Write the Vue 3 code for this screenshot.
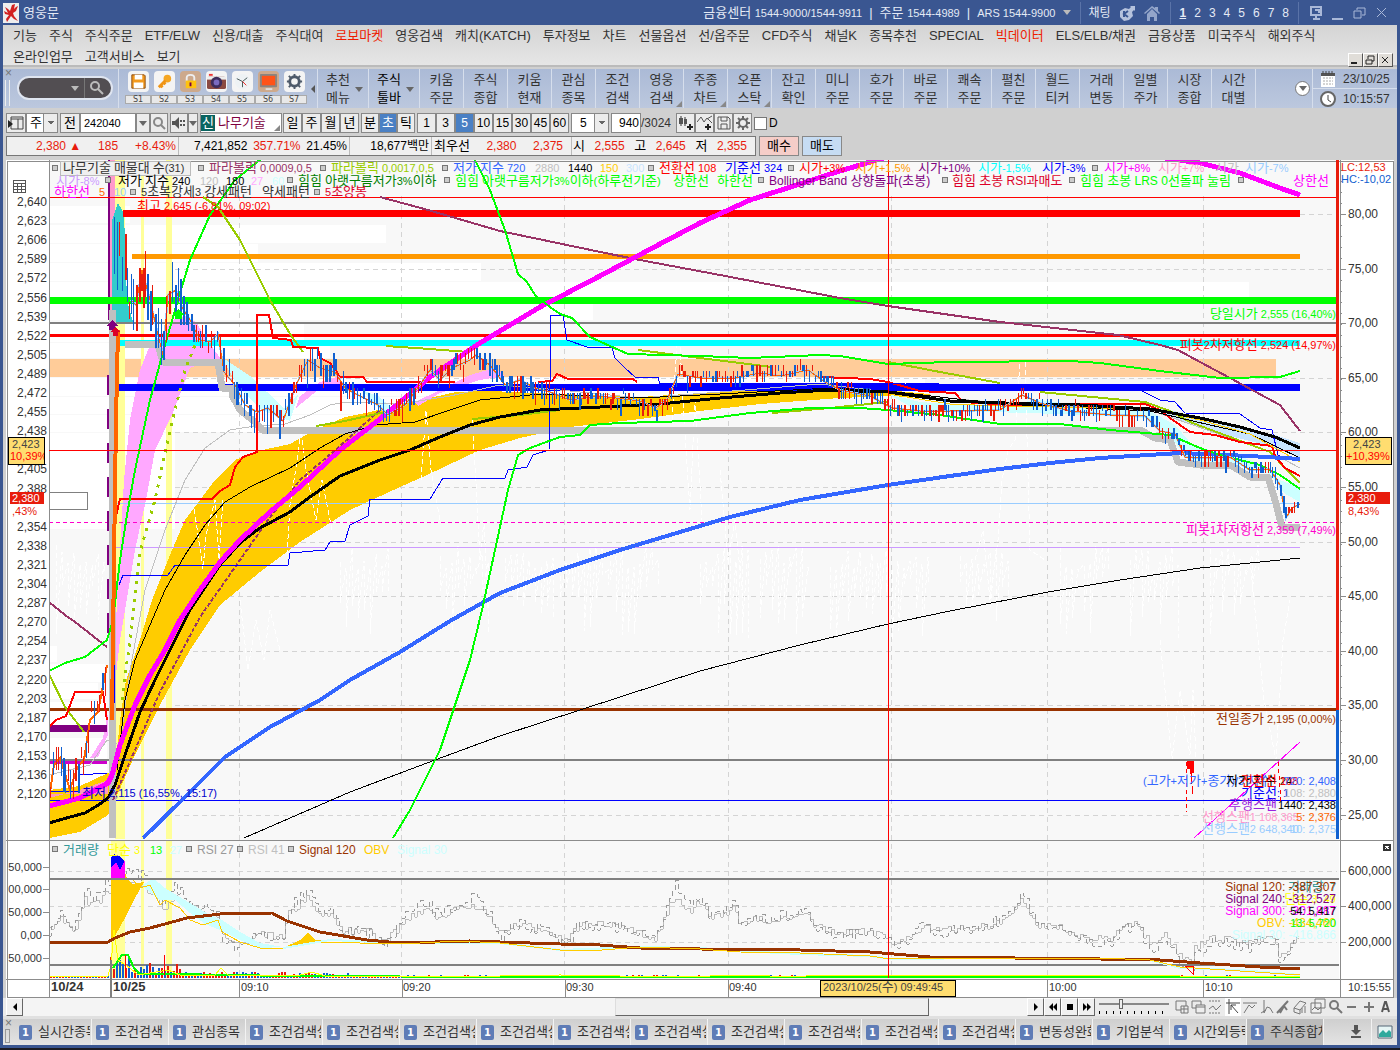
<script setup>
const menuTop = [
  '기능', '주식', '주식주문', 'ETF/ELW', '신용/대출', '주식대여', '로보마켓', '영웅검색', '캐치(KATCH)', '투자정보', '차트',
  '선물옵션', '선/옵주문', 'CFD주식', '채널K', '종목추천', 'SPECIAL', '빅데이터', 'ELS/ELB/채권', '금융상품', '미국주식', '해외주식',
]
const menuBottom = ['온라인업무', '고객서비스', '보기']
const hotMenus = ['로보마켓', '빅데이터']
const screens = [1, 2, 3, 4, 5, 6, 7, 8]
const tools = [
  ['키움', '주문'], ['주식', '종합'], ['키움', '현재'], ['관심', '종목'], ['조건', '검색'], ['영웅', '검색', 1], ['주종', '차트', 1],
  ['오픈', '스탁', 1], ['잔고', '확인'], ['미니', '주문'], ['호가', '주문'], ['바로', '주문'], ['쾌속', '주문'], ['펼친', '주문'],
  ['월드', '티커'], ['거래', '변동'], ['일별', '주가'], ['시장', '종합'], ['시간', '대별'],
]
const periods = ['일', '주', '월', '년']
const units = ['분', '초', '틱']
const counts = ['1', '3', '5', '10', '15', '30', '45', '60']
const tasks = [
  '실시간종목', '조건검색', '관심종목', ...Array(10).fill('조건검색실'), '변동성완화', '기업분석', '시간외등락', '주식종합차',
]

// splits a label into Korean and Latin runs, which are set at different sizes
function runs(text) {
  return text.match(/[가-힣]+|[^가-힣]+/g).map((t) => ({ t, ko: /[가-힣]/.test(t) }))
}

// price axis, one label each 19.1 units
const prices = ['2,640', '2,623', '2,606', '2,589', '2,572', '2,556', '2,539', '2,522', '2,505', '2,489', '2,472', '2,455', '2,438', '',
  '2,405', '2,388', '', '2,354', '2,338', '2,321', '2,304', '2,287', '2,270', '2,254', '2,237', '2,220', '2,203', '2,187', '2,170', '2,153', '2,136', '2,120']
const rates = ['80,00', '75,00', '70,00', '65,00', '60,00', '55,00', '50,00', '45,00', '40,00', '35,00', '30,00', '25,00']
const gridX = [239, 401, 564, 728, 891, 1047, 1203]
const times = [[241, '09:10'], [403, '09:20'], [566, '09:30'], [729, '09:40'], [1049, '10:00'], [1205, '10:10']]
const rightTicks = Array.from({ length: 60 }, (_, i) => 170 + i * 11).filter((y) => y < 836)

// white volume-profile bars: [y, right edge, height]
const profile = [
  [206, 130, 17], [225, 386, 18], [244, 258, 18], [263, 481, 18], [282, 1249, 18], [304, 593, 16], [324, 304, 18], [343, 330, 15],
  [378, 925, 18], [397, 700, 17], [415, 360, 17], [433, 175, 96], [646, 57, 16], [664, 105, 18], [683, 98, 16], [702, 107, 24], [738, 107, 50],
]

const levels = [
  [49, 1337, 197, 1, '#ff0000'], [123, 1300, 213, 7, '#ff0000'], [132, 1300, 256, 5, '#ff9900'],
  [49, 1337, 300, 7, '#00ff00'], [49, 1337, 323, 2, '#808080'], [49, 1337, 335, 3, '#ff0000'],
  [115, 1300, 343, 6, '#00ffff'], [115, 1300, 387, 7, '#0000ff'],
  [115, 1300, 503, 1, '#99ccff'], [115, 1300, 547, 1, '#cc99ff'],
  [49, 1337, 709, 3, '#993300'], [49, 107, 728, 7, '#800080'], [49, 107, 762, 3, '#cc00cc'],
  [49, 1337, 760, 2, '#808080'], [49, 1337, 800, 1, '#0000ff'],
]

const clouds = [
  ['#ffcc00', '49,790 80,786 108,773 115,772 120,720 126,680 140,640 152,600 170,555 185,520 200,500 215,480 235,460 258,451 290,444 315,430 345,417 370,412 400,405 430,398 456,392 490,391 560,394 640,397 700,393 760,390 840,386 930,394 930,398 888,396 840,398 760,404 700,411 640,419 570,427 520,438 480,450 427,475 400,487 350,510 300,542 260,572 220,605 190,650 160,705 135,755 115,800 108,815 80,832 49,838'],
  ['#ff99bb', '49,794 108,794 108,780 80,790 49,798'],
  ['#ffa8ff', '113,700 117,600 124,480 130,420 140,370 150,345 165,330 172,320 186,316 196,322 206,338 220,358 228,366 205,362 190,368 172,415 155,450 146,500 135,550 120,640'],
  ['#ffa8ff', '90,758 103,738 108,712 108,735 98,757'],
  ['#ffa8ff', '300,396 320,382 340,376 340,386 318,390 296,408'],
  ['#ffa8ff', '415,402 440,390 470,375 495,368 505,376 480,380 440,393 418,406'],
  ['#33cccc', '112,322 112,220 118,203 124,213 127,300 133,322'],
  ['#ccffff', '220,356 250,376 284,408 298,395 290,421 262,410 240,389'],
  ['#ccffff', '362,390 378,396 392,408 402,402 392,414 378,408'],
  ['#ccffff', '888,394 920,402 960,405 1005,404 1040,400 1080,406 1150,411 1175,425 1195,448 1230,452 1262,465 1280,480 1300,488 1300,502 1285,494 1270,474 1240,466 1190,462 1170,436 1145,418 1060,414 990,412 920,412'],
  ['#c8e4ff', '1160,408 1200,417 1240,427 1275,435 1300,443 1300,458 1270,446 1230,436 1190,424 1160,412'],
]

const lines = [
  ['#c0c0c0', 7, '112,310 112,838'],
  ['#c0c0c0', 7, '125,344 158,345 163,362 218,362 222,388 232,388 232,395 240,410 255,422 262,430 1140,430 1155,438 1170,440 1178,462 1200,465 1232,466 1250,477 1268,477 1275,500 1282,527 1300,527'],
  ['#c0c0c0', 1, '49,775 90,765 107,740 120,745 130,670 145,590 165,530 185,480 205,448 230,430 255,426 285,424 310,415 330,405 345,402 400,404 450,396 500,385 560,390 640,398 720,392 820,384 888,392 1000,403 1150,410 1230,438 1270,452 1300,468'],
  ['#993366', 2, '49,602 65,615 75,622 107,647'],
  ['#993366', 2, '113,800 135,750 150,715 160,692 200,617 240,560 268,520 300,480 340,446 380,410', '4 2'],
  ['#993366', 2, '380,197 428,210 500,231 610,254 640,260 720,275 840,298 888,306 1000,322 1118,335 1160,345 1178,350 1200,362 1230,378 1254,391 1280,405 1300,431'],
  ['#99cc00', 2, '49,674 65,707 84,732'],
  ['#99cc00', 3, '122,700 133,617 140,552 155,500 170,430 185,370 195,345', '3 6'],
  ['#99cc00', 2, '203,197 218,207 240,240 270,300 290,334 303,352'],
  ['#99cc00', 2, '386,346 430,349 468,352'],
  ['#99cc00', 2, '316,426 345,421 385,412'],
  ['#99cc00', 2, '472,419 520,415 560,410'],
  ['#99cc00', 2, '638,350 700,358 772,367'],
  ['#99cc00', 2, '772,413 830,408 888,402'],
  ['#99cc00', 2, '888,362 940,372 1000,383'],
  ['#99cc00', 2, '1040,392 1145,402 1170,411 1190,422 1230,437 1270,452 1285,468 1300,483'],
  ['#ff0000', 2, '49,727 56,720 66,716 75,692 103,692 107,720'],
  ['#ff0000', 2, '115,520 120,499 212,499 220,491 230,485 235,467 243,457 257,452 257,315 269,315 273,338 291,340 293,347 318,348 320,358 330,363 340,377 363,377 367,382 455,382'],
  ['#ff0000', 2, '538,382 552,381 557,374 568,379 633,379 637,382'],
  ['#ff0000', 2, '820,377 870,379 888,382 920,391 955,393 963,402 1010,405 1145,404 1160,410 1170,418 1190,432 1215,435 1240,442 1272,446 1275,456 1285,468 1300,476'],
  ['#0000ff', 1, '49,791 78,791 80,775 107,773'],
  ['#0000ff', 1, '119,585 123,575 168,575 175,565 288,565 290,553 325,550 330,542 345,541 350,525 368,516 370,499 430,499 443,478 505,478 508,470 527,467 533,455 549,450 551,315 563,315 567,340 587,347 612,348 615,358 625,368 635,377 658,377 660,384 905,383 1140,390 1160,400 1175,402 1185,413 1240,414 1260,428 1272,430 1278,455 1287,459 1300,460'],
  ['#000000', 1, '117,770 125,700 135,660 150,625 165,590 185,555 205,525 225,502 250,487 290,468 320,448 345,434 375,425 415,422 450,410 480,400 540,394 640,398 720,394 830,388 888,391 1000,404 1150,411 1210,425 1250,434 1275,446 1300,458'],
  ['#ffcc00', 1, '888,394 950,404 1000,406 1150,409 1200,420 1250,434 1275,448 1300,462'],
  ['#3366ff', 4, '143,838 180,802 225,757 270,727 320,700 350,680 400,652 450,621 500,593 560,570 620,550 680,532 730,517 800,500 888,485 950,476 1000,469 1050,463 1100,458 1180,453 1250,456 1300,459'],
  ['#000000', 1, '244,838 350,792 435,760 500,736 580,710 700,671 800,645 888,624 950,611 1048,592 1120,580 1200,568 1260,562 1300,558'],
  ['#000000', 3, '49,823 70,817 85,813 100,804 108,798 115,785 125,755 140,712 155,680 170,650 190,610 220,565 240,543 260,528 290,512 310,497 340,476 380,460 410,450 440,437 470,425 500,417 540,410 600,407 660,404 720,398 780,393 830,390 888,392 950,401 1005,403 1080,405 1150,409 1200,418 1240,427 1275,437 1300,448'],
  ['#ff00ff', 5, '49,806 80,798 108,783 112,775 120,745 135,705 150,675 165,650 180,620 200,590 220,562 240,540 270,512 300,487 340,450 380,419 430,377 480,343 540,307 600,276 660,244 700,223 750,200 800,184 830,174 860,165 884,158'],
  ['#ff00ff', 5, '1165,158 1200,163 1240,173 1280,188 1300,195'],
  ['#ff00ff', 1, '1194,838 1300,742'],
  ['#00ff00', 2, '49,671 65,663 85,657 107,640 113,620 120,560 127,515 135,470 150,400 165,345 178,300 190,260 210,215 235,180 262,158'],
  ['#00ff00', 2, '474,158 490,190 505,230 518,274 527,282 535,295 550,307 560,314 572,318 590,337 610,346 628,354 700,356 750,358 820,355 840,356 888,364 950,362 1070,361 1100,363 1160,371 1220,378 1280,377 1300,371'],
  ['#00ff00', 2, '393,838 410,810 440,750 470,660 482,610 495,550 508,490 518,455 530,448 560,437 580,435 590,425 620,423 690,421 750,413 810,408 860,408 888,410 940,415 1000,424 1060,424 1110,430 1170,435 1200,448 1220,455 1240,460 1260,465 1280,475 1300,489'],
  ['#ff6600', 4, '112,720 114,560 116,420 118,330'],
  ['#0000ff', 1, '114,665 114,703'],
  ['#800080', 2, '108,375 108,640', '20 14'],
]

let seed = 7
function rnd() {
  seed = (seed * 16807) % 2147483647
  return seed / 2147483647
}

const whites = [
  '193,501 203,569 206,535 215,500 219,560 223,500', '287,555 290,505 298,455 301,430 306,470 316,520 322,480 332,530',
  '421,480 426,410 431,470 440,520', '472,420 475,465 480,560 484,520 488,610',
  '240,600 248,670 256,620 264,660 270,610 280,650', '672,420 677,345 680,345 684,420 690,510 695,400 702,520', '720,470 728,560 735,520 742,590',
  '975,560 983,530 990,600 998,540 1002,480 1008,450 1015,440 1020,360 1025,360 1030,550 1045,560',
  '1160,640 1172,760 1180,690 1190,755 1193,690 1196,760', '1250,560 1264,700 1276,760 1283,640 1290,600',
]
for (const start of [56, 340, 440, 505, 560, 610, 700, 760, 830, 880, 960, 1060, 1130, 1210]) {
  const pts = []
  for (let i = 0; i < 9; i++) {
    const x = start + i * 6
    pts.push(`${x},${Math.round(545 + rnd() * 25)}`, `${x},${Math.round(570 + rnd() * 70)}`)
  }
  whites.push(pts.join(' '))
}

function sample(points, x) {
  for (let i = 1; i < points.length; i++) {
    const [x0, y0] = points[i - 1]
    const [x1, y1] = points[i]
    if (x <= x1) return y0 + ((y1 - y0) * (x - x0)) / (x1 - x0)
  }
  return points[points.length - 1][1]
}
const yesterday = [[49, 800], [54, 765], [60, 758], [70, 790], [77, 768], [84, 760], [90, 720], [98, 712], [107, 665]]
const today = [[114, 270], [122, 260], [128, 310], [131, 300], [136, 305], [142, 270], [150, 300], [158, 335], [163, 355], [168, 295], [176, 290], [182, 307], [190, 320], [200, 340], [210, 342], [218, 334], [224, 372], [235, 385], [245, 405], [257, 412], [268, 408], [283, 421], [296, 385], [308, 360], [320, 368], [335, 372], [345, 388], [358, 395], [378, 405], [388, 415], [405, 405], [420, 385], [430, 370], [440, 380], [452, 368], [470, 360], [476, 355], [490, 365], [505, 385], [520, 380], [535, 388], [550, 392], [570, 400], [600, 396], [640, 401], [656, 408], [668, 398], [678, 374], [700, 378], [735, 378], [760, 373], [780, 376], [808, 370], [825, 382], [840, 390], [870, 396], [892, 408], [920, 411], [950, 411], [1000, 410], [1022, 395], [1040, 403], [1070, 411], [1110, 415], [1145, 416], [1160, 431], [1175, 434], [1185, 457], [1200, 458], [1230, 457], [1250, 470], [1270, 469], [1280, 485], [1286, 518], [1292, 508], [1300, 504]]
const candles = []
const tick = 5.7
function addCandles(points, from, to, spread) {
  for (let x = from; x < to; x += rnd() < 0.5 ? 2 : 3) {
    const mid = sample(points, x)
    const size = spread(x)
    const top = Math.round(Math.round((mid - size * rnd()) / tick) * tick)
    const steps = Math.max(1, Math.round((size * (0.5 + rnd())) / tick))
    const slope = sample(points, x + 5) - sample(points, x - 5)
    const up = slope < -2 ? rnd() < 0.75 : slope > 2 ? rnd() < 0.25 : rnd() < 0.5
    candles.push({ x, y: top, w: rnd() < 0.4 ? 2 : 1, h: Math.round(steps * tick), c: up ? '#e81c0c' : '#1060d0' })
  }
}
addCandles(yesterday, 50, 107, () => 22)
addCandles(today, 114, 1300, (x) => (x < 128 ? 56 : x < 182 ? 34 : x < 345 ? 18 : x < 560 ? 14 : 10))
const avgPath = today.filter((p) => p[0] > 128).map((p) => p.join(',')).join(' ')
const avgPrev = yesterday.map((p) => p.join(',')).join(' ')

const rsiBase = [[49, 930], [60, 918], [75, 928], [85, 900], [95, 905], [110, 890], [130, 885], [150, 890], [163, 910], [175, 895], [185, 905], [210, 915], [218, 915], [222, 935], [240, 945], [260, 932], [283, 938], [287, 915], [307, 898], [320, 915], [335, 915], [340, 930], [370, 932], [384, 943], [405, 920], [425, 908], [440, 920], [450, 912], [474, 904], [490, 918], [502, 934], [515, 925], [550, 930], [566, 940], [580, 925], [610, 925], [630, 930], [655, 938], [663, 922], [672, 899], [677, 895], [690, 912], [700, 902], [710, 918], [735, 908], [738, 926], [750, 920], [800, 918], [808, 915], [815, 925], [830, 932], [880, 932], [893, 942], [910, 938], [922, 925], [940, 931], [985, 926], [1005, 920], [1022, 900], [1035, 924], [1060, 926], [1070, 933], [1085, 938], [1115, 938], [1120, 928], [1135, 925], [1155, 948], [1165, 935], [1180, 955], [1192, 960], [1195, 948], [1215, 937], [1230, 940], [1250, 942], [1262, 937], [1275, 937], [1280, 958], [1290, 945], [1300, 935]]
function rsiLine(scale, noise) {
  const out = []
  for (let x = 49; x < 1300; x += 3) {
    const y = Math.round(928 + (sample(rsiBase, x) - 928) * scale + (rnd() - 0.5) * noise)
    out.push(`${x},${y} ${x + 2},${y}`)
  }
  return out.join(' ')
}
const rsiSlow = rsiLine(1, 8)
const rsiFast = rsiLine(1.3, 12)

const volumes = []
for (let x = 50; x < 1300; x += 3) {
  const h = x < 110 ? 2 : x < 130 ? 18 * (0.5 + rnd() * 0.7) : x < 180 ? 10 * (0.5 + rnd()) : x < 350 ? 2 + rnd() * 4 : 1 + rnd() * 2
  volumes.push({ x, h: Math.round(h), c: rnd() < 0.5 ? '#e81c0c' : '#1060d0' })
}

const legend = [
  [63, 168, '나무기술 매물대 수(31)', '#333'], [209, 168, '파라볼릭 0,0009,0,5', '#993366'], [331, 168, '파라볼릭 0,0017,0,5', '#99cc00'],
  [453, 168, '저가 지수 720', '#3366ff'], [535, 168, '2880', '#c0c0c0'], [568, 168, '1440', '#000'], [600, 168, '150', '#ffcc00'], [626, 168, '300', '#c8e4ff'],
  [659, 168, '전환선 108', '#ff0000'], [725, 168, '기준선 324', '#0000ff'], [799, 168, '시가+3%', '#ff0000'], [855, 168, '시가+1,5%', '#ff9900'],
  [918, 168, '시가+10%', '#800080'], [978, 168, '시가-1,5%', '#00ffff'], [1042, 168, '시가-3%', '#0000ff'], [1104, 168, '시가+8%', '#ff00ff'],
  [1158, 168, '시가+7%', '#ff99cc'], [1215, 168, '시가', '#c0c0c0'], [1245, 168, '시가-7%', '#99ccff'],
  [56, 181, '시가-8%', '#cc99ff'], [118, 181, '저가 지수 240', '#000'], [200, 181, '120', '#c0c0c0'], [226, 181, '180', '#000'], [251, 181, '27', '#ffa8ff'],
  [272, 181, '60', '#ccffff'], [298, 181, '힘힘 아랫구름저가3%이하', '#008000'], [455, 181, '힘힘 아랫구름저가3%이하(하루전기준)', '#00ff00'],
  [673, 181, '상한선', '#00ff00'], [717, 181, '하한선', '#00ff00'], [769, 181, 'Bollinger Band 상향돌파(초봉)', '#800080', 1],
  [952, 181, '힘힘 초봉 RSI과매도', '#dc0028', 1], [1080, 181, '힘힘 초봉 LRS 0선돌파 눌림', '#00ff00', 1], [1293, 181, '상한선', '#ff00ff'],
  [54, 192, '하한선', '#ff00ff'], [99, 192, '5', '#ff6600'], [114, 192, '10', '#99ccff'], [141, 192, '5초복강세3 강세패턴', '#333'], [262, 192, '약세패턴', '#333'],
  [325, 192, '5초양봉', '#dc0028'],
  [63, 850, '거래량', '#339999'], [107, 850, '단순 3', '#ffff00'], [150, 850, '13', '#00ff00'], [170, 850, '27', '#ccffff'],
  [197, 850, 'RSI 27', '#999', 1], [248, 850, 'RSI 41', '#c0c0c0', 1], [299, 850, 'Signal 120', '#993300', 1], [364, 850, 'OBV', '#ffcc00', 1], [397, 850, 'Signal 30', '#ccffff', 1],
]
const markers = [[52, 168], [198, 168], [320, 168], [442, 168], [648, 168], [788, 168], [1092, 168], [105, 180], [287, 180], [444, 180], [758, 180], [942, 180], [1069, 180], [1238, 180], [130, 192], [314, 192], [52, 849], [186, 849], [237, 849], [288, 849]]

const notes = [
  [137, 206, '최고 2,645 (-6,81%, 09:02)', '#ff0000', 0, 'start'], [82, 793, '최저 2,115 (16,55%, 15:17)', '#0000cc', 0, 'start'],
  [1336, 314, '당일시가 2,555 (16,40%)', '#00ff00', 0, 'end'], [1336, 345, '피봇2차저항선 2,524 (14,97%)', '#ff0000', 0, 'end'],
  [1336, 530, '피봇1차저항선 2,359 (7,49%)', '#ff00cc', 0, 'end'], [1336, 719, '전일종가 2,195 (0,00%)', '#993300', 0, 'end'],
  [1143, 781, '(고가+저가+종가)/3 지수', '#3366ff', 0, 'start'], [1226, 781, '저가 지수 24', '#000', 0, 'start'], [1241, 781, '전환선 108', '#ff0000', 0, 'start'],
  [1336, 781, '720: 2,408', '#3366ff', 0, 'end'], [1241, 793, '기준선: 1', '#0000ff', 0, 'start'], [1336, 793, '108: 2,880', '#c0c0c0', 0, 'end'],
  [1229, 805, '후행스팬', '#9922dd', 0, 'start'], [1336, 805, '1440: 2,438', '#000', 0, 'end'], [1202, 817, '선행스팬1 108,365', '#ff99cc', 0, 'start'],
  [1336, 817, '5: 2,376', '#ff6600', 0, 'end'], [1202, 829, '선행스팬2 648,340', '#99ccff', 0, 'start'], [1336, 829, '10: 2,375', '#99ccff', 0, 'end'],
  [1336, 887, '거래량: 7', '#339999', 0, 'end'], [1336, 887, 'Signal 120: -387,307', '#993300', 1, 'end'],
  [1336, 899, '단순 3: 49', '#ffff00', 0, 'end'], [1336, 899, 'Signal 240: -312,527', '#800080', 1, 'end'],
  [1336, 911, 'Signal 300: -301,887', '#ff00ff', 1, 'end'], [1336, 911, '54: 5,417', '#000', 0, 'end'],
  [1336, 923, 'OBV: -434,460', '#ffcc00', 1, 'end'], [1336, 923, '13: 5,720', '#00ff00', 0, 'end'], [1336, 935, 'Signal 30: -416,866', '#ccffff', 1, 'end'],
]
const volLeft = [[867, '50,000'], [889, '00,000'], [912, '50,000'], [935, '0,00'], [958, '50,000']]
const volRight = [[871, '600,000'], [906, '400,000'], [942, '200,000']]
</script>

<template>
  <div class="app">
    <header class="title">
      <svg class="logo" viewBox="0 0 16 20"><rect width="16" height="20" fill="#eee" /><path d="M9 2l3-1-1 5 2-2 2-1-2 5-3 2 1 3 4 5-4-2-3-3-2 3-2 3-1-3 3-4-4-1-1-3 4 2-3-6 3 2 2 2z" fill="#d22020" /></svg>
      <h1>영웅문</h1>
      <span class="phones">금융센터 <small>1544-9000/1544-9911</small><s>|</s>주문 <small>1544-4989</small><s>|</s><small>ARS 1544-9900</small></span>
      <i class="caret light"></i>
      <span class="tcell chat">채팅
        <svg width="18" height="18" viewBox="0 0 18 18"><path d="M2 7l5-3 4 1 2-2-1-1h5v5l-1-1-2 2 1 4-4 4-5 1-4-4z" fill="#b5c2dd" /><path d="M6 7v6M10 7l-4 3 4 3" stroke="#3a5691" stroke-width="2" fill="none" /></svg>
        <svg width="18" height="18" viewBox="0 0 18 18"><path d="M1 9l8-7 3 2V3h3v4l2 2-1 1-7-6-7 6zM4 10l5-5 5 5v7h-3v-4H7v4H4z" fill="#93a5ca" /></svg>
      </span>
      <nav class="tcell screens"><a v-for="n in screens" :key="n" href="#" :class="{ on: n === 1 }">{{ n }}</a></nav>
      <span class="tcell wins">
        <svg width="80" height="18" viewBox="0 0 80 18" fill="none" stroke="#a9b8d8" stroke-width="2"><path d="M2 3h10v8H2zM7 11v4M4 15h7M6 6h4v3" /><path d="M23 15h11" /><path d="M45 7h7v7h-7zM48 6V4h8v7h-3M68 4l9 9M77 4l-9 9" stroke-width="1" /></svg>
      </span>
    </header>

    <nav class="menu">
      <div class="menurow"><a v-for="m in menuTop" :key="m" href="#" :class="{ hot: hotMenus.includes(m) }">{{ m }}</a></div>
      <div class="menurow">
        <a v-for="m in menuBottom" :key="m" href="#">{{ m }}</a>
        <span class="mdi"><button aria-label="최소화"><svg viewBox="0 0 12 12"><path d="M2 9h6" /></svg></button><button aria-label="복원"><svg viewBox="0 0 12 12"><path d="M2 6h6v4H2zM4 5V2h6v5H8" stroke-width="1" /></svg></button><button aria-label="닫기"><svg viewBox="0 0 12 12"><path d="M3 3l6 6M9 3l-6 6" stroke-width="1" /></svg></button></span>
      </div>
    </nav>

    <div class="toolbar">
      <div class="grip"><span>×</span><i></i></div>
      <div class="searchcell">
        <div class="pill"><input aria-label="화면검색" /><i class="caret light"></i><button aria-label="검색"><svg width="14" height="14" viewBox="0 0 14 14" fill="none" stroke="#bbb" stroke-width="2"><circle cx="5" cy="5" r="4" /><path d="M8 8l5 5" /></svg></button></div>
      </div>
      <div class="shots">
        <div class="shot"><button aria-label="저장"><svg viewBox="0 0 20 20"><path d="M3 3h13l1 1v13H3z" fill="#f39a1e" stroke="#8a4a10" /><path d="M6 3h8v5H6zM5 11h10v6H5z" fill="#fff" /></svg></button><span>S1</span></div>
        <div class="shot"><button aria-label="키"><svg viewBox="0 0 20 20"><circle cx="13" cy="7" r="4" fill="#f5a623" /><path d="M11 9l-7 7M6 14l2 2M9 11l2 2" stroke="#ef9415" stroke-width="3" /></svg></button><span>S2</span></div>
        <div class="shot tan"><button aria-label="잠금"><svg viewBox="0 0 20 20"><path d="M6 10V6q0-3 4-3t4 3v4" fill="none" stroke="#eee" stroke-width="2" /><rect x="5" y="9" width="11" height="8" fill="#ffc20e" /><path d="M10 11v4" stroke="#704" stroke-width="2" /></svg></button><span>S3</span></div>
        <div class="shot"><button aria-label="캡처"><svg viewBox="0 0 20 20"><rect y="5" width="20" height="13" rx="2" fill="#8b4a42" /><rect y="5" width="20" height="3" fill="#eee" /><circle cx="10" cy="11" r="6" fill="#3e2c5c" /><circle cx="10" cy="11" r="3" fill="#7b6bc0" /><rect x="2" y="2" width="4" height="2" fill="#e33" /></svg></button><span>S4</span></div>
        <div class="shot"><button aria-label="시계"><svg viewBox="0 0 20 20"><circle cx="10" cy="10" r="8" fill="#eef2f4" /><path d="M4 7l6 3 5-4M10 10v6" stroke="#455" fill="none" /><path d="M10 10l4 4" stroke="#e22" /></svg></button><span>S5</span></div>
        <div class="shot tan"><button aria-label="모니터"><svg viewBox="0 0 20 20"><rect x="1" y="2" width="18" height="14" rx="1" fill="#8a8580" /><rect x="3" y="4" width="14" height="10" fill="#ff5318" /><path d="M7 18h7" stroke="#ddd" stroke-width="2" /></svg></button><span>S6</span></div>
        <div class="shot"><button aria-label="설정"><svg viewBox="0 0 20 20"><circle cx="10" cy="10" r="5" fill="none" stroke="#4e5a6a" stroke-width="3" /><path d="M10 2v3M10 15v3M2 10h3M15 10h3M4 4l3 3M13 13l3 3M16 4l-3 3M7 13l-3 3" stroke="#4e5a6a" stroke-width="2" /></svg></button><span>S7</span></div>
        <i class="back"></i>
      </div>
      <button class="tool first">추천<br />메뉴<i class="caret"></i></button>
      <button class="tool first dark">주식<br />툴바<i class="caret"></i></button>
      <button v-for="(t, i) in tools" :key="i" class="tool">{{ t[0] }}<br />{{ t[1] }}<i v-if="t[2]" class="fold"></i></button>
      <div class="morecell"><button class="more" aria-label="더보기"><i class="caret"></i></button></div>
      <div class="clock">
        <div><svg width="16" height="16" viewBox="0 0 16 16"><path d="M1 2h14v14H1z" fill="#fff" /><path d="M1 2h14v3H1z" fill="#555" /><path d="M3 7h10M3 10h10M3 13h10" stroke="#aaa" stroke-dasharray="2 1" /><path d="M3 0v3M6 0v3M9 0v3M12 0v3" stroke="#444" /></svg>23/10/25</div>
        <div><svg width="16" height="16" viewBox="0 0 16 16"><circle cx="8" cy="8" r="7" fill="#fff" stroke="#666" stroke-width="2" /><path d="M8 4v5l3 2" fill="none" stroke="#444" /></svg>10:15:57</div>
      </div>
    </div>

    <div class="code">
      <button class="b w20" aria-label="차트창"><svg width="16" height="14" viewBox="0 0 16 14" fill="none" stroke="#444"><path d="M3 1h12v12H3zM3 3h12M10 3v10" /><path d="M0 4l5 4-5 4z" fill="#222" stroke="none" /></svg></button>
      <select class="b ko w31" aria-label="종류"><option>주</option></select>
      <button class="b ko w20 gap">전</button>
      <input class="b num w56" aria-label="종목코드" value="242040" />
      <button class="b w14" aria-label="목록"><i class="caret"></i></button>
      <button class="b w18" aria-label="찾기"><svg width="14" height="14" viewBox="0 0 14 14" fill="none" stroke="#888" stroke-width="2"><circle cx="6" cy="6" r="4" /><path d="M9 9l4 4" /></svg></button>
      <button class="b w18 gap" aria-label="소리"><svg width="14" height="12" viewBox="0 0 14 12" fill="#555"><path d="M0 4h3l4-4v12L3 8H0z" /><path d="M9 3v2M9 7v2M12 3v2M12 7v2" stroke="#555" stroke-width="2" /></svg></button>
      <button class="b w10" aria-label="소리목록"><i class="caret"></i></button>
      <div class="b ko name"><em>신</em>나무기술<i class="fold"></i></div>
      <button v-for="p in periods" :key="p" class="b ko w19">{{ p }}</button>
      <i class="space"></i>
      <button v-for="u in units" :key="u" class="b ko w18" :class="{ sel: u === '초' }">{{ u }}</button>
      <i class="space"></i>
      <button v-for="c in counts" :key="c" class="b w19" :class="{ sel: c === '5' }">{{ c }}</button>
      <select class="b w38 gap" aria-label="간격"><option>5</option></select>
      <input class="b w30 gap right" aria-label="봉수" value="940" />
      <span class="total">/3024</span>
      <button class="b w19 gap" aria-label="봉차트"><svg viewBox="0 0 16 16" width="16" height="16"><path d="M3 1v10M7 2v9" stroke="#333" /><path d="M1 3h4v6H1zM6 4h3v5H6z" fill="#555" /><path d="M12 9v6M9 12h6" stroke="#222" stroke-width="2" /></svg></button>
      <button class="b w19" aria-label="지표추가"><svg viewBox="0 0 16 16" width="16" height="16" fill="none" stroke="#555"><path d="M0 7l4-5 3 5 3-4 5 5M10 4l5-3" /><path d="M11 9v6M8 12h6" stroke="#222" stroke-width="2" /></svg></button>
      <button class="b w19" aria-label="저장"><svg viewBox="0 0 16 16" width="16" height="16" fill="none" stroke="#555"><path d="M2 2h10l2 2v10H2zM5 2v4h6V2M5 14V9h6v5" /></svg></button>
      <button class="b w19" aria-label="설정"><svg viewBox="0 0 16 16" width="16" height="16" fill="none" stroke="#666"><circle cx="8" cy="8" r="4" stroke-width="2" /><path d="M8 1v3M8 12v3M1 8h3M12 8h3M3 3l2 2M11 11l2 2M13 3l-2 2M5 11l-2 2" stroke-width="2" /></svg></button>
      <label class="day"><input type="checkbox" />D</label>
    </div>

    <div class="quotes">
      <div class="qbox">
        <div class="q q1 red"><span>2,380 ▲</span><span>185</span><span>+8.43%</span></div>
        <div class="q q2"><span>7,421,852</span><span class="red">357.71%</span><span>21.45%</span></div>
        <div class="q q3"><span>18,677백만</span></div>
        <div class="q q4"><span class="ko">최우선</span><span class="red">2,380</span><span class="red">2,375</span></div>
        <div class="q q5"><span class="ko">시</span><span class="red">2,555</span><span class="ko">고</span><span class="red">2,645</span><span class="ko">저</span><span class="red">2,355</span></div>
      </div>
      <button class="buy">매수</button>
      <button class="sell">매도</button>
    </div>

    <main class="chart">
      <svg viewBox="6 160 1388 838" shape-rendering="crispEdges">
        <defs>
          <clipPath id="plot"><rect x="49" y="160" width="1290" height="679" /></clipPath>
          <clipPath id="vol"><rect x="49" y="840" width="1290" height="138" /></clipPath>
          <clipPath id="laxis"><rect x="7" y="160" width="37" height="820" /></clipPath>
        </defs>
        <rect x="6" y="160" width="1388" height="838" fill="#fff" />
        <rect x="49" y="160" width="1290" height="819" fill="#f8f8f8" />

        <g clip-path="url(#plot)">
          <rect v-for="(p, i) in profile" :key="i" x="49" :y="p[0]" :width="p[1] - 49" :height="p[2]" fill="#fff" />
          <rect x="49" y="359" width="1227" height="18" fill="#ffcc99" />
          <rect x="115" y="160" width="10" height="680" fill="#ffff99" />
          <rect x="141" y="160" width="3" height="680" fill="#ffff99" />
          <rect x="166" y="160" width="6" height="680" fill="#ffff99" />
          <rect x="110" y="160" width="5" height="150" fill="#ff99cc" />
          <rect x="108" y="160" width="2" height="160" fill="#800080" />
        </g>
        <g stroke="#d4d4d4" stroke-dasharray="5 4">
          <line v-for="x in gridX" :key="x" :x1="x" :x2="x" y1="196" y2="978" stroke-width="1" />
          <line v-for="(r, i) in rates" :key="r" x1="175" x2="1337" :y1="Math.round(214 + i * 54.6)" :y2="Math.round(214 + i * 54.6)" />
          <line v-for="y in [871, 906, 942]" :key="y" x1="49" x2="1337" :y1="y" :y2="y" />
        </g>

        <g clip-path="url(#plot)" fill="none">
          <polygon v-for="(c, i) in clouds" :key="i" :points="c[1]" :fill="c[0]" />
          <polyline v-for="(w, i) in whites" :key="'w' + i" :points="w" stroke="#fff" stroke-dasharray="5 3" />
          <line v-for="(l, i) in levels" :key="'l' + i" :x1="l[0]" :x2="l[1]" :y1="l[2]" :y2="l[2]" :stroke="l[4]" :stroke-width="l[3]" />
          <line x1="49" x2="1337" y1="522" y2="522" stroke="#ff00cc" stroke-dasharray="4 3" />
          <polyline v-for="(l, i) in lines" :key="'p' + i" :points="l[2]" :stroke="l[0]" :stroke-width="l[1]" :stroke-dasharray="l[3]" stroke-linejoin="round" />
          <polyline :points="avgPath" stroke="#99ccff" stroke-width="2" />
          <polyline :points="avgPath" stroke="#ff6600" />
          <polyline :points="avgPrev" stroke="#ff6600" stroke-width="2" />
          <rect v-for="(c, i) in candles" :key="'c' + i" :x="c.x" :y="c.y" :width="c.w" :height="c.h" :fill="c.c" stroke="none" />
          <path d="M106 326l6-6 6 6h-3v4h-6v-4z" fill="#800080" />
          <path d="M110 332l5-5 5 5h-2v4h-5v-4z" fill="#dc0028" />
          <path d="M172 315l6-6 6 6h-2v4h-7v-4z" fill="#00ff00" />
          <path d="M1187 761h7v12h-2l1 26-3-30h-3z" fill="#ff0000" />
          <path d="M1186 762v50M1278 762l3 40" stroke="#ff0000" stroke-dasharray="4 3" />
          <path d="M49 492h38v17H49" stroke="#808080" />
        </g>

        <g clip-path="url(#vol)" fill="none">
          <rect x="111" y="840" width="14" height="138" fill="#ffff99" />
          <rect x="141" y="840" width="3" height="138" fill="#ffff99" />
          <rect x="166" y="840" width="6" height="138" fill="#ffff99" />
          <polyline :points="rsiSlow" stroke="#bbb" />
          <polyline :points="rsiFast" stroke="#999" stroke-dasharray="5 3" />
          <polygon points="111,940 111,868 115,862 122,860 126,876 132,884 144,882 135,898 125,918 115,936" fill="#ffcc00" />
          <polygon points="111,858 114,854 119,856 124,860 124,870 111,870" fill="#0000ff" />
          <polygon points="111,868 116,862 120,870 125,860 125,879 111,879" fill="#ff00ff" />
          <polygon points="142,886 153,878 165,888 185,900 210,915 222,920 240,932 260,943 283,947 260,948 240,940 220,930 205,924 190,913 175,900 160,900" fill="#ccffff" />
          <polyline points="125,878 133,880 140,888 150,885 160,905 165,900 180,908 190,920 203,925 218,920 222,932 240,942 260,948 283,948" stroke="#ffcc00" />
          <polygon points="283,948 300,940 308,933 315,940 330,940 300,946" fill="#ffcc00" />
          <line x1="49" x2="1339" y1="879" y2="879" stroke="#808080" stroke-width="2" />
          <line x1="49" x2="1339" y1="965" y2="965" stroke="#808080" stroke-width="2" />
          <rect v-for="(v, i) in volumes" :key="i" :x="v.x" :y="978 - v.h" width="2" :height="v.h" :fill="v.c" />
          <polyline points="113,968 122,955 128,955 134,968 140,974 180,974 220,975 300,976 500,977 1300,977" stroke="#00ff00" stroke-width="2" />
          <polyline points="49,976 108,976 111,965 114,930 118,960 130,968 138,975 168,970 180,975 215,975 221,968 228,975 300,975 312,972 325,976 500,976 560,975 680,977 740,975 800,977 812,975 900,975 1180,976 1300,976" stroke="#ffff00" />
          <polyline points="283,948 330,940 400,943 500,943 560,950 640,947 700,948 740,951 800,954 870,956 890,959 1000,958 1150,960 1180,968 1240,970 1300,975" stroke="#ccffff" stroke-width="2" />
          <polyline points="49,942 108,942 115,938 130,932 150,928 187,918 220,914 272,913 287,921 320,932 367,940 400,943 470,941 560,944 600,945 640,948 700,949 800,950 870,952 930,957 1100,959 1160,960 1200,963 1260,967 1300,969" stroke="#993300" stroke-width="3" />
          <polyline points="320,942 400,944 460,941 500,943 560,950 590,951 640,947 700,949 740,952 800,953 870,956 890,959 1000,958 1100,958 1150,960 1180,967 1240,971 1300,975" stroke="#ffcc00" />
          <path d="M1185 966h8v8zM125 955v20M164 955v20" stroke="#ff0000" />
        </g>

        <g fill="none" stroke="#8c8c8c">
          <path d="M7 161H1393V997H7zM6 840H1393M6 979H1393M49 160V997M1340 160V997" />
          <path d="M111 979v18M239 979v18M402 979v18M565 979v18M728 979v18M1047 979v18M1203 979v18" />
          <path v-for="y in rightTicks" :key="y" :d="`M1340 ${y}h2`" />
          <path v-for="(r, i) in rates" :key="r" :d="`M1340 ${Math.round(214 + i * 54.6)}h6`" />
          <path d="M1340 871h6M1340 906h6M1340 942h6M43 867h6M43 889h6M43 912h6M43 935h6M43 958h6" />
        </g>
        <line x1="111" x2="111" y1="960" y2="997" stroke="#808080" stroke-width="2" />
        <line x1="49" x2="1337" y1="450" y2="450" stroke="#ff0000" />
        <line x1="888" x2="888" y1="160" y2="978" stroke="#ff0000" />
        <rect x="1336" y="160" width="3" height="550" fill="#e81c0c" />
        <rect x="1336" y="710" width="3" height="129" fill="#1060d0" />

        <rect x="60" y="161" width="130" height="14" fill="#f0f0f0" stroke="#bbb" />
        <rect v-for="(m, i) in markers" :key="i" :x="m[0]" :y="m[1] - 3" width="5" height="5" fill="#ccc" stroke="#777" />
        <text v-for="(t, i) in legend" :key="i" :x="t[0]" :y="t[1] + 4" :fill="t[3]" :class="{ reg: t[4] }"><tspan v-for="(r, j) in runs(t[2])" :key="j" :class="{ ko: r.ko }">{{ r.t }}</tspan></text>
        <text v-for="(t, i) in notes" :key="i" :x="t[0]" :y="t[1] + 4" :fill="t[3]" :class="{ reg: t[4] }" :text-anchor="t[5]"><tspan v-for="(r, j) in runs(t[2])" :key="j" :class="{ ko: r.ko }">{{ r.t }}</tspan></text>

        <g class="axis" fill="#333">
          <text v-for="(p, i) in prices" :key="i" x="47" :y="Math.round(206 + i * 19.1)" text-anchor="end">{{ p }}</text>
          <text v-for="(r, i) in rates" :key="r" x="1348" :y="Math.round(218 + i * 54.6)">{{ r }}</text>
          <text v-for="(v, i) in volRight" :key="i" x="1348" :y="v[0] + 4">{{ v[1] }}</text>
          <text x="51" y="991" class="bold">10/24</text>
          <text x="113" y="991" class="bold">10/25</text>
        </g>
        <g fill="#333">
          <text v-for="(v, i) in volLeft" :key="i" x="42" :y="v[0] + 4" text-anchor="end">{{ v[1] }}</text>
          <text v-for="t in times" :key="t[1]" :x="t[0]" y="991">{{ t[1] }}</text>
          <text x="1348" y="991">10:15:55</text>
        </g>
        <text x="1341" y="171" fill="#e81c0c">LC:12,53</text>
        <text x="1341" y="183" fill="#1060d0">HC:-10,02</text>
        <rect x="8" y="437" width="36" height="27" fill="#ffdd70" stroke="#000" />
        <rect x="1345" y="437" width="46" height="27" fill="#ffdd70" stroke="#000" />
        <g>
          <text x="12" y="448" fill="#444">2,423</text><text x="10" y="460" fill="#ff0000" clip-path="url(#laxis)">10,39%</text>
          <text x="1353" y="448" fill="#444">2,423</text><text x="1346" y="460" fill="#ff0000">+10,39%</text>
          <rect x="10" y="492" width="34" height="12" fill="#e81c0c" /><rect x="1346" y="492" width="44" height="12" fill="#e81c0c" />
          <text x="12" y="502" fill="#fff">2,380</text><text x="12" y="515" fill="#e81c0c">,43%</text>
          <text x="1348" y="502" fill="#fff">2,380</text><text x="1348" y="515" fill="#e81c0c">8,43%</text>
        </g>
        <rect x="820" y="980" width="135" height="16" fill="#ffdd70" stroke="#000" />
        <text x="823" y="991" fill="#444"><tspan v-for="(r, j) in runs('2023/10/25(수) 09:49:45')" :key="j" :class="{ ko: r.ko }">{{ r.t }}</tspan></text>
        <path d="M13 180h12v12H13zM13 183h12M13 186h12M13 189h12M17 183v9M21 183v9" fill="none" stroke="#555" />
        <rect x="1383" y="844" width="8" height="7" fill="#333" /><path d="M1385 846l4 3M1389 846l-4 3" stroke="#fff" />
      </svg>
    </main>

    <div class="scroll">
      <button class="s3" aria-label="왼쪽"><svg width="6" height="8"><path d="M5 0v8L1 4z" /></svg></button>
      <div class="track"><div class="thumb"></div></div>
      <button class="s3" aria-label="재생"><svg width="6" height="8"><path d="M1 0v8l4-4z" /></svg></button>
      <button class="s3" aria-label="뒤로"><svg width="10" height="8"><path d="M5 0v8L1 4zM9 0v8L5 4z" /></svg></button>
      <button class="s3" aria-label="정지"><svg width="8" height="8"><path d="M1 1h6v6H1z" /></svg></button>
      <button class="s3" aria-label="앞으로"><svg width="10" height="8"><path d="M1 0v8l4-4zM5 0v8l4-4z" /></svg></button>
      <div class="speed"><input type="range" aria-label="속도" min="0" max="10" value="3" /><i></i></div>
      <svg class="drawing" viewBox="0 0 224 18" width="224" height="18" fill="none" stroke="#777">
        <path d="M6 3h10v9H6z" /><path d="M11 8h7v7h-7zM14 8v7M11 11h7" fill="#eee" />
        <path d="M22 3h9v7h-9z" /><path d="M26 7h9v8h-9zM26 9h9" fill="#eee" />
        <path d="M39 3h12M39 15h12" stroke-dasharray="2 1" /><path d="M39 11l4-3 3 4 5-5" />
        <rect x="55" y="0" width="16" height="18" fill="#fff" stroke="none" /><path d="M56 5h14M59 1v15M61 7l7 8M61 7v5M61 7h5" stroke="#444" />
        <path d="M73 5h14M74 15l5-8 3 3 3-3" /><path d="M94 2v13l3-6 3 1 3 5M91 15l5-3" /><path d="M107 15l11-12M110 15l4-7 3 4" stroke-width="2" />
        <path d="M124 10l6-7 6 2-6 7zM124 10v4l6 2v-4M135 8v7M132 10v5" /><path d="M145 1h10v9h-10zM141 5h10v10h-10z" fill="#eee" /><path d="M142 12l3-3 3 3 3-3" />
        <circle cx="164" cy="7" r="4" stroke-width="2" /><path d="M167 10l5 5M177 9h9M194 9h10M199 4v10" stroke-width="2" /><path d="M212 14l3-10h1l3 10M213 11h5" stroke="#555" stroke-width="2" />
      </svg>
    </div>

    <footer class="tasks">
      <div class="tgrip">×<i></i></div>
      <button v-for="(t, i) in tasks" :key="i" class="task" :class="{ now: i === 16 }"><b>1</b><span>{{ t }}</span></button>
      <span class="tail wide"><svg width="14" height="16" viewBox="0 0 14 16"><path d="M5 1h4v5h3l-5 5-5-5h3zM2 12h10v2H2z" fill="#555" /></svg></span>
      <span class="tail"><svg width="16" height="14" viewBox="0 0 16 14"><path d="M1 1h14v12H1z" fill="#e6f5f5" stroke="#567" /><path d="M2 12V9l4-4 3 3 3-3 2 2v5z" fill="#2fa99d" /></svg></span>
    </footer>
  </div>
</template>

<style>
body { margin: 0; background: #1c1c24; }
</style>

<style scoped>
.app { box-sizing: border-box; min-height: 1048px; border: solid #3a5691; border-width: 0 3px 3px; background: #d0d0d0; font: 13px/16px "Liberation Sans", "Noto Sans CJK KR", sans-serif; color: #333; overflow: hidden; }
a { color: inherit; text-decoration: none; }
button, input, select { font: inherit; color: inherit; padding: 0; margin: 0; border: 0; border-radius: 0; box-sizing: border-box; }
svg { display: block; flex: none; }
.caret { border: 4px solid transparent; border-top: 5px solid #666; border-bottom: 0; flex: none; }
.caret.light { border-top-color: #bbb; }
.fold { position: absolute; right: 1px; bottom: 1px; border: 3px solid; border-color: transparent #888 #888 transparent; }

.title { display: flex; align-items: center; height: 25px; background: #3a5691; color: #e4eaf5; }
.logo { width: 16px; height: 20px; }
.title h1 { font-size: 13px; font-weight: 400; margin: 0 auto 0 4px; }
.phones { margin-right: 8px; white-space: nowrap; }
.phones small { font-size: 11px; }
.phones s { text-decoration: none; margin: 0 7px; }
.tcell { display: flex; align-items: center; height: 22px; border-left: 1px solid #5a73a8; margin-left: 9px; padding-left: 7px; box-sizing: border-box; }
.chat { gap: 7px; font-size: 12px; }
.screens { gap: 8px; font-size: 12px; padding-left: 9px; }
.screens .on { font-weight: 700; text-decoration: underline; }
.wins { padding: 0 8px 0 10px; }

.menu { height: 42px; background: linear-gradient(#d4d4d4, #e6e6e6); border-bottom: 2px solid #bbb; box-sizing: border-box; margin-bottom: 2px; }
.menurow { display: flex; gap: 12px; padding: 3px 4px 0 10px; height: 18px; white-space: nowrap; }
.hot { color: #ee1c00; }
.mdi { display: flex; margin-left: auto; padding-top: 4px; }
.mdi button { width: 15px; height: 14px; background: #e0ddd8; border: 1px solid; border-color: #fff #555 #555 #fff; }
.mdi svg { width: 12px; height: 12px; fill: none; stroke: #222; stroke-width: 2; }

.toolbar { display: flex; height: 39px; background: linear-gradient(#abbad6, #bcc8de); }
.grip { width: 11px; color: #777; font-size: 12px; line-height: 8px; padding-left: 2px; box-sizing: border-box; }
.grip i { display: block; width: 3px; height: 26px; margin-top: 3px; border: solid #eee; border-width: 0 1px; }
.searchcell { width: 105px; border-right: 1px solid #d6deec; padding-top: 7px; box-sizing: border-box; }
.pill { display: flex; align-items: center; height: 24px; width: 96px; margin-left: 3px; background: #524e52; border: 2px solid #dfe5f0; border-radius: 12px; box-sizing: border-box; }
.pill input { width: 52px; background: none; }
.pill button { background: none; border-left: 1px solid #777; margin-left: 5px; padding-left: 5px; height: 20px; }
.shots { display: flex; width: 199px; padding: 2px 0 0 6px; box-sizing: border-box; border-right: 1px solid #d6deec; align-items: flex-start; }
.shot { width: 26px; text-align: center; }
.shot button { width: 21px; height: 21px; border-radius: 4px; background: #f4f4f4; margin-bottom: 3px; padding: 1px; }
.shot.tan button { background: #cda98c; }
.shot svg { width: 19px; height: 19px; }
.shot span { display: block; height: 9px; background: #e8e8e8; border: 1px solid #aaa; box-sizing: border-box; font: 8px/7px "DejaVu Sans", sans-serif; color: #444; }
.back { border: 4px solid transparent; border-right-color: #555; border-left: 0; margin: 14px 0 0 4px; }
.tool { position: relative; flex: 0 1 44px; background: none; border-right: 1px solid #d6deec; line-height: 18px; white-space: nowrap; color: #333; }
.tool.first { flex: 0 1 51px; text-align: left; padding-left: 8px; }
.tool.first .caret { position: absolute; right: 5px; top: 18px; }
.tool.dark { color: #000; }
.morecell { flex: 1; display: flex; justify-content: flex-end; align-items: center; padding-right: 2px; border-right: 1px solid #d6deec; }
.more { display: flex; align-items: center; justify-content: center; width: 15px; height: 15px; border-radius: 8px; background: #fff; border: 1px solid #777; }
.clock { width: 84px; }
.clock div { display: flex; gap: 7px; align-items: center; height: 19px; padding-left: 7px; font-size: 12px; }
.clock div:first-child { border-bottom: 1px solid #d6deec; }

.code { display: flex; align-items: center; height: 20px; padding: 5px 3px 3px; }
.b { flex: none; display: flex; align-items: center; justify-content: center; height: 20px; background: #ececec; border: 1px solid #888; color: #000; font-size: 12px; box-sizing: border-box; }
.ko { font-size: 13px; }
.num { font-size: 11px; }
select.b { appearance: none; background: linear-gradient(45deg, transparent 50%, #666 50%) right 6px top 7px / 4px 4px no-repeat, linear-gradient(135deg, #666 50%, transparent 50%) right 2px top 7px / 4px 4px no-repeat, linear-gradient(90deg, #888 1px, #ececec 1px) right / 14px 100% no-repeat, #fff; padding-left: 3px; }
select.w38 { padding-left: 8px; }
input.b { background: #fff; padding-left: 3px; }
.b.right { text-align: right; padding-right: 1px; }
.w10 { width: 10px; } .w14 { width: 14px; } .w18 { width: 18px; } .w19 { width: 19px; } .w20 { width: 20px; } .w30 { width: 30px; } .w31 { width: 32px; } .w38 { width: 38px; } .w56 { width: 56px; }
.gap { margin-left: 2px; }
.b.sel { background: #4a80c4; color: #fff; }
.name { position: relative; width: 82px; margin: 0 1px 0 2px; background: #fff; color: #800040; justify-content: flex-start; }
.name em { font-style: normal; background: #0a6460; color: #fff; padding: 0 1px; margin-right: 3px; }
.space { width: 2px; }
.total { font-size: 12px; width: 30px; margin-right: 3px; }
.day { display: flex; align-items: center; font-size: 12px; color: #000; }
.day input { appearance: none; width: 13px; height: 13px; background: #fff; border: 1px solid #777; margin: 0 2px; }

.quotes { display: flex; gap: 3px; height: 20px; padding: 0 3px; margin-bottom: 4px; }
.qbox { display: flex; width: 750px; border: 1px solid #777; background: #f0f0f0; color: #000; box-sizing: border-box; }
.q { display: flex; align-items: center; justify-content: space-between; border-right: 1px solid #bbb; box-sizing: border-box; white-space: nowrap; font-size: 12px; }
.q:last-child { border: 0; }
.q1 { width: 172px; padding: 0 2px 0 29px; }
.q2 { width: 171px; padding: 0 2px 0 15px; }
.q3 { width: 82px; padding: 0 2px; justify-content: flex-end; }
.q4 { width: 140px; padding: 0 8px 0 2px; }
.q5 { flex: 1; padding: 0 8px 0 1px; }
.red { color: #e81c0c; }
.buy, .sell { width: 40px; border: 1px solid #888; color: #000; }
.buy { background: #f5cdc8; }
.sell { background: #c6dcf3; }

.chart { margin: 0 3px; }
.chart svg { width: 100%; height: auto; }
.chart text { font-family: "Liberation Sans", "Noto Sans CJK KR", sans-serif; font-size: 11px; white-space: pre; }
.chart text.reg, .chart .axis text { font-size: 12px; }
.chart tspan.ko { font-size: 13px; }
.chart .axis text.bold { font-weight: 700; font-size: 13px; }

.scroll { display: flex; height: 18px; padding: 0 3px; background: #ebebeb; border-bottom: 3px solid #e0e0e0; }
.s3 { display: flex; align-items: center; justify-content: center; width: 17px; background: #f0f0f0; border: 1px solid; border-color: #fff #666 #666 #fff; }
.track { flex: 1; background: #f4f4f4; }
.thumb { width: 31%; height: 16px; margin-left: 59%; background: #efefef; border: 1px solid; border-color: #ddd #666 #666 #ddd; }
.speed { width: 70px; margin: 0 1px 0 4px; }
.speed input { display: block; width: 70px; height: 11px; appearance: none; background: linear-gradient(#888, #888) center / 100% 2px no-repeat; }
.speed input::-webkit-slider-thumb { appearance: none; width: 4px; height: 10px; background: #eee; border: 1px solid #666; }
.speed i { display: block; height: 3px; margin-top: 2px; background: repeating-linear-gradient(90deg, #000 0 1px, transparent 1px 7px); }

.tasks { display: flex; height: 26px; background: linear-gradient(#cfcfcf, #e4e4e4); }
.tgrip { width: 12px; font-size: 12px; line-height: 8px; color: #777; padding-left: 2px; box-sizing: border-box; }
.tgrip i { display: block; width: 3px; height: 12px; border: 1px solid #999; margin-top: 2px; }
.task { flex: 0 1 77px; min-width: 0; display: flex; align-items: center; gap: 6px; padding-left: 4px; background: none; border-right: 1px solid #f2f2f2; overflow: hidden; }
.task b { flex: none; width: 13px; height: 15px; border-radius: 2px; background: #5f7cb6; color: #fff; font: 700 10px/15px "DejaVu Sans", sans-serif; }
.task span { overflow: hidden; white-space: nowrap; width: 52px; text-align: left; }
.task.now { background: #bbb; }
.tail { width: 25px; display: flex; align-items: center; justify-content: center; }
.tail.wide { flex: 1; padding-left: 17px; border-right: 1px solid #f2f2f2; }
</style>
